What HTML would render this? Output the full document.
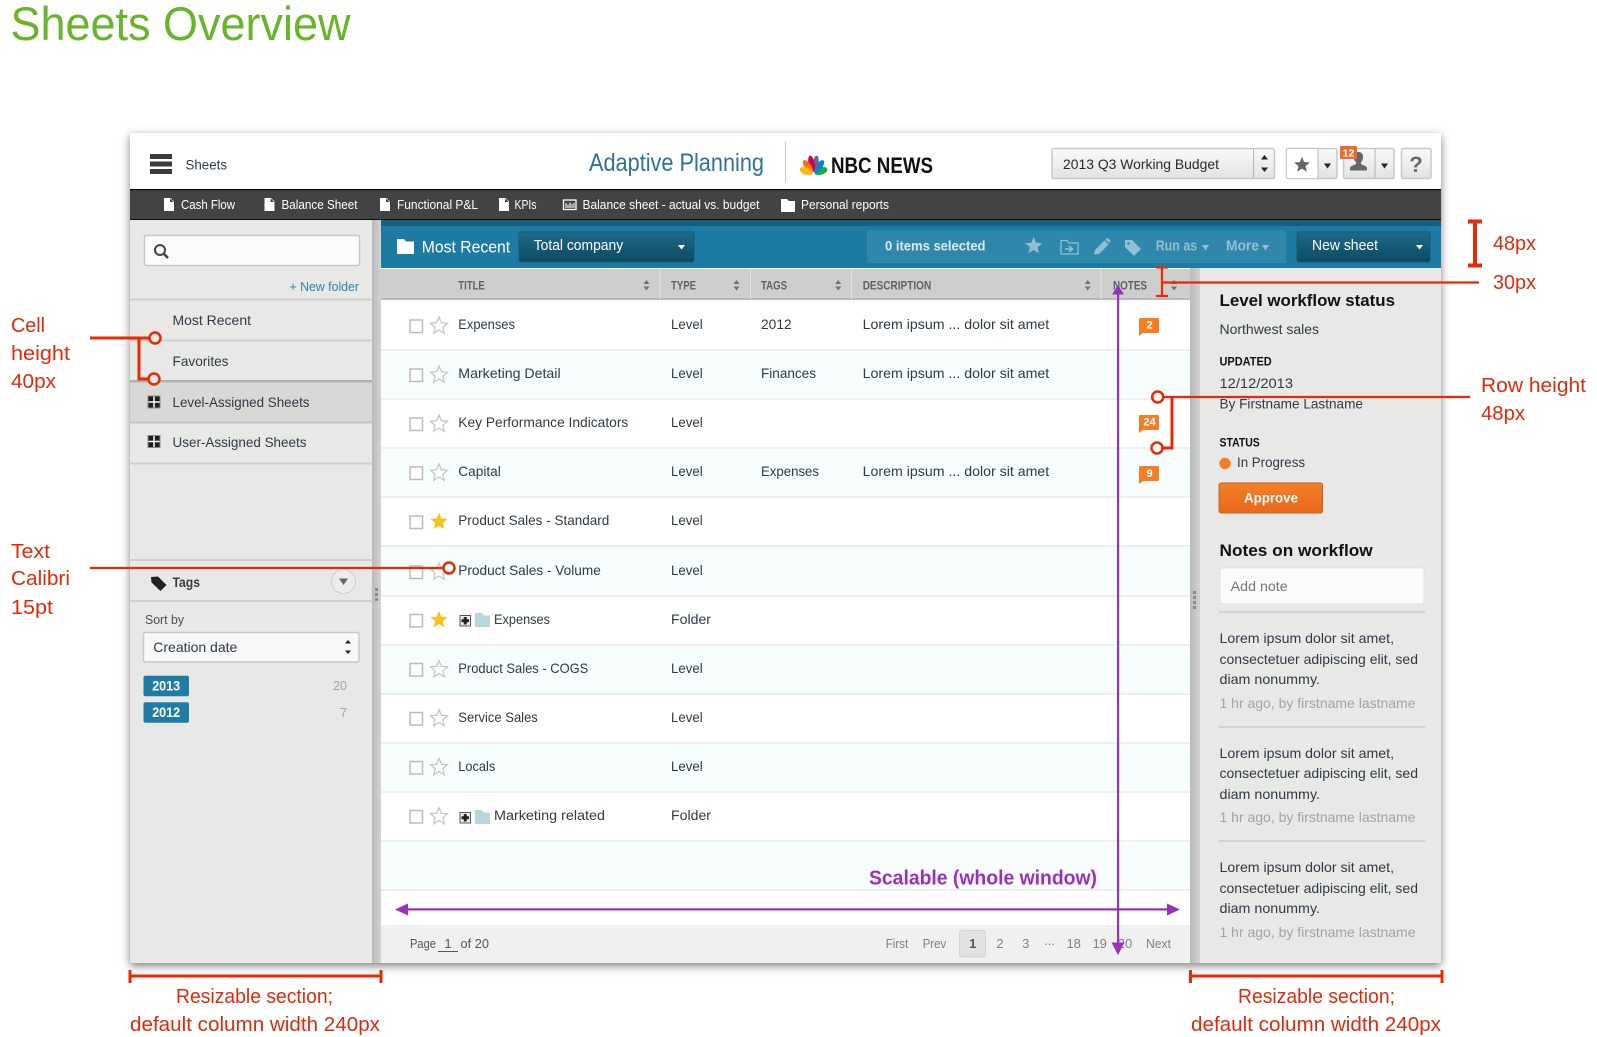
<!DOCTYPE html>
<html><head><meta charset="utf-8"><title>Sheets Overview</title>
<style>
html,body{margin:0;padding:0;background:#fff;width:1597px;height:1037px;overflow:hidden}
svg{display:block}
text{font-family:"Liberation Sans",sans-serif;font-size:14px;fill:#303a45}
.b{font-weight:bold}
.w{fill:#fff}
.dk{font-size:13px;fill:#fff}
.hd{font-size:11.5px;font-weight:bold;fill:#5f6266}
.r{font-size:20px;fill:#e3290a}
.g{fill:#a3a3a3}
.p{font-size:13px;fill:#808080}
.nt{font-size:11px;font-weight:bold;fill:#fff;text-anchor:middle}
.tb{font-size:14.5px;fill:#fff}
.mu{font-size:14.5px;font-weight:bold;fill:#8fc0d5}
</style></head><body>
<svg xmlns="http://www.w3.org/2000/svg" width="1597" height="1037" viewBox="0 0 1597 1037">
<defs>
<linearGradient id="dd" x1="0" y1="0" x2="0" y2="1"><stop offset="0" stop-color="#1d6a8a"/><stop offset="1" stop-color="#0c4a63"/></linearGradient>
<linearGradient id="bt" x1="0" y1="0" x2="0" y2="1"><stop offset="0" stop-color="#fafafa"/><stop offset="1" stop-color="#e2e2e2"/></linearGradient>
<linearGradient id="or" x1="0" y1="0" x2="0" y2="1"><stop offset="0" stop-color="#f58024"/><stop offset="1" stop-color="#e9661c"/></linearGradient>
<linearGradient id="sp" x1="0" y1="0" x2="1" y2="0"><stop offset="0" stop-color="#b9b9b9"/><stop offset="1" stop-color="#d2d2d2"/></linearGradient>
<filter id="sh" x="-5%" y="-5%" width="110%" height="110%"><feDropShadow dx="0" dy="3" stdDeviation="4.5" flood-color="#000" flood-opacity=".5"/></filter>
<path id="star" d="M0-9L2.35-3.24 8.56-2.78 3.8 1.24 5.29 7.28 0 4-5.29 7.28-3.8 1.24-8.56-2.78-2.35-3.24Z"/>
<path id="doc" d="M0 0H6.5L10 3.5V13H0ZM6 .8V4H9.2V3.6L6.4 .8Z" fill="#fff" fill-rule="evenodd"/>
<path id="fold" d="M0 0H7L9 2.5H15V14H0Z"/>
<g id="plus"><rect width="10.5" height="10.5" fill="#eee" stroke="#555" stroke-width="1"/><path d="M5.25 1.5V9M1.5 5.25H9" stroke="#222" stroke-width="3"/></g>
<path id="note" d="M0 1.5Q0 0 1.5 0H18.5Q20 0 20 1.5V13.5Q20 15 18.5 15H4L0 18Z" fill="#f57e25"/>
<path id="sort" d="M0 4L3 0 6 4ZM0 6.5H6L3 10.5Z" fill="#6f7174"/>
<rect id="cb" width="12.5" height="12.5" fill="#fff" stroke="#bcbcbc" stroke-width="1.5"/>
<g id="grid"><rect x=".5" y=".5" width="12" height="12" fill="#1d1d1d" stroke="#8a8a8a"/><path d="M6.5 1V12M1 6.5H12" stroke="#fff" stroke-width="1.500"/></g>
</defs>

<rect width="1597" height="1037" fill="#fff"/>
<text x="10.500" y="40" style="font-size:47.5px;fill:#68b52c" textLength="340" lengthAdjust="spacingAndGlyphs">Sheets Overview</text>

<!-- app shell -->
<rect x="130" y="133" width="1311" height="830" fill="#e8e8e6" filter="url(#sh)"/>
<rect x="130" y="133" width="1311" height="56" fill="#fff"/>

<!-- header -->
<path d="M150 154h22v5h-22zM150 161.500h22v5h-22zM150 169h22v5h-22z" fill="#3a3a3c"/>
<text x="185.500" y="169.500" fill="#444" textLength="41.500" lengthAdjust="spacingAndGlyphs">Sheets</text>
<text x="589" y="171" style="font-size:25px;fill:#2f719b" textLength="175" lengthAdjust="spacingAndGlyphs">Adaptive Planning</text>
<rect x="785" y="142" width="1" height="40" fill="#c8c8c8"/>
<g transform="translate(813.500 173) scale(.88 1.12)">
<ellipse cy="-8.500" rx="3.400" ry="7.500" fill="#0db14b" transform="rotate(78)"/>
<ellipse cy="-8.500" rx="3.400" ry="7.500" fill="#0089d0" transform="rotate(47)"/>
<ellipse cy="-8.500" rx="3.400" ry="7.500" fill="#6460aa" transform="rotate(15)"/>
<ellipse cy="-8.500" rx="3.400" ry="7.500" fill="#cc004c" transform="rotate(-15)"/>
<ellipse cy="-8.500" rx="3.400" ry="7.500" fill="#f37021" transform="rotate(-47)"/>
<ellipse cy="-8.500" rx="3.400" ry="7.500" fill="#fcb711" transform="rotate(-78)"/>
</g>
<text x="831" y="173" class="b" style="font-size:22px;fill:#111" textLength="102" lengthAdjust="spacingAndGlyphs">NBC NEWS</text>

<rect x="1052" y="148.500" width="222.500" height="30" rx="2" fill="url(#bt)" stroke="#c8c8c8" stroke-width="1.500"/>
<rect x="1253" y="149" width="1" height="29" fill="#b5b5b5"/>
<path d="M1264.500 155l-3.500 4.500h7zM1264.500 172l-3.500-4.500h7z" fill="#222"/>
<text x="1063" y="169" style="fill:#2a2a2a" textLength="156" lengthAdjust="spacingAndGlyphs">2013 Q3 Working Budget</text>

<rect x="1286.500" y="148.500" width="50.500" height="30" rx="2" fill="url(#bt)" stroke="#c8c8c8" stroke-width="1.500"/>
<rect x="1287" y="149" width="30.500" height="29" rx="1" fill="#fff"/>
<rect x="1317.500" y="149" width="1" height="29" fill="#b5b5b5"/>
<use href="#star" transform="translate(1302 165) scale(.92)" fill="#666"/>
<path d="M1324 163.500h7l-3.500 5z" fill="#222"/>

<rect x="1343.500" y="148.500" width="50.500" height="30" rx="2" fill="url(#bt)" stroke="#c8c8c8" stroke-width="1.500"/>
<rect x="1374.500" y="149" width="1" height="29" fill="#b5b5b5"/>
<path d="M1350 170.500v-2.500c0-2 5-3 6-4v-2c-1.500-1-2-2.500-2-5 0-3 1.500-5 4.500-5s4.500 2 4.500 5c0 2.500-.5 4-2 5v2c1 1 6 2 6 4v2.500z" fill="#666"/>
<path d="M1381 163.500h7l-3.500 5z" fill="#222"/>
<rect x="1340" y="146" width="17" height="13" rx="1" fill="#f26a2b"/>
<text x="1348.500" y="156.500" class="nt" style="font-size:10.5px">12</text>

<rect x="1401.500" y="148.500" width="29.500" height="30" rx="2" fill="url(#bt)" stroke="#c8c8c8" stroke-width="1.500"/>
<text x="1416" y="172" class="b" text-anchor="middle" style="font-size:22px;fill:#6a6a6a">?</text>

<!-- dark nav -->
<rect x="130" y="189" width="1311" height="31" fill="#434345"/>
<rect x="130" y="189" width="1311" height="1.200" fill="#000"/>
<rect x="130" y="219" width="1311" height="1" fill="#111"/>
<use href="#doc" x="164" y="198"/>
<text x="181" y="209" class="dk" textLength="54" lengthAdjust="spacingAndGlyphs">Cash Flow</text>
<use href="#doc" x="264.500" y="198"/>
<text x="281.500" y="209" class="dk" textLength="76" lengthAdjust="spacingAndGlyphs">Balance Sheet</text>
<use href="#doc" x="380" y="198"/>
<text x="397" y="209" class="dk" textLength="81" lengthAdjust="spacingAndGlyphs">Functional P&amp;L</text>
<use href="#doc" x="499" y="198"/>
<text x="514.500" y="209" class="dk" textLength="22" lengthAdjust="spacingAndGlyphs">KPIs</text>
<rect x="563.500" y="200" width="12.500" height="9.500" fill="none" stroke="#fff" stroke-width="1.300"/>
<path d="M566 203v5M568 204.500v3.500M570 202.500v5.500M572 204v4M574 203v5" stroke="#fff" stroke-width="1.100"/>
<text x="582.500" y="209" class="dk" textLength="177" lengthAdjust="spacingAndGlyphs">Balance sheet - actual vs. budget</text>
<path d="M781 199h6l2 2h6v11h-14z" fill="#fff"/>
<text x="801" y="209" class="dk" textLength="88" lengthAdjust="spacingAndGlyphs">Personal reports</text>

<!-- sidebar -->
<rect x="130" y="220" width="242" height="743" fill="#e8e8e6"/>
<rect x="372" y="220" width="9" height="743" fill="url(#sp)"/>
<rect x="144.500" y="235.500" width="215" height="30" rx="1.500" fill="#fbfbfb" stroke="#c9c9c9" stroke-width="1.500"/>
<circle cx="160" cy="250" r="5" fill="none" stroke="#444" stroke-width="2"/>
<path d="M163.500 253.500l4.500 4.500" stroke="#444" stroke-width="2.600"/>
<text x="289.500" y="291" style="font-size:12.500px;fill:#2f86a8" textLength="69.500" lengthAdjust="spacingAndGlyphs">+ New folder</text>
<rect x="130" y="298.500" width="242" height="2" fill="#cfcfcd"/>
<text x="172.500" y="325" textLength="78.500" lengthAdjust="spacingAndGlyphs">Most Recent</text>
<rect x="130" y="339.500" width="242" height="2" fill="#cfcfcd"/>
<text x="172.500" y="366" textLength="56" lengthAdjust="spacingAndGlyphs">Favorites</text>
<rect x="130" y="381" width="242" height="41" fill="#d8d8d6"/>
<rect x="130" y="380" width="242" height="2.500" fill="#b0b0ae"/>
<rect x="130" y="421.500" width="242" height="2" fill="#c4c4c2"/>
<use href="#grid" x="147.500" y="395.500"/>
<text x="172.500" y="407" textLength="137" lengthAdjust="spacingAndGlyphs">Level-Assigned Sheets</text>
<use href="#grid" x="147.500" y="435"/>
<text x="172.500" y="447" textLength="134" lengthAdjust="spacingAndGlyphs">User-Assigned Sheets</text>
<rect x="130" y="462.500" width="242" height="2" fill="#cfcfcd"/>
<rect x="130" y="559" width="242" height="2" fill="#cfcfcd"/>
<rect x="130" y="600" width="242" height="2" fill="#cfcfcd"/>
<path d="M151 577l7-.5 8.500 8.500-6 6-9-8.500z" fill="#222"/>
<text x="172.500" y="587" class="b" style="fill:#3a3a3c" textLength="27.500" lengthAdjust="spacingAndGlyphs">Tags</text>
<circle cx="343.500" cy="581.500" r="12" fill="#ececea" stroke="#cfcfcf" stroke-width="1"/>
<path d="M339 578.500h9l-4.500 6.500z" fill="#666"/>
<text x="145" y="624" style="font-size:13px;fill:#47505a" textLength="39" lengthAdjust="spacingAndGlyphs">Sort by</text>
<rect x="143.500" y="632.500" width="215.500" height="29.500" rx="2" fill="#f8f8f8" stroke="#c9c9c9" stroke-width="1.500"/>
<text x="153.300" y="652" textLength="84" lengthAdjust="spacingAndGlyphs">Creation date</text>
<path d="M348 640l-3 3.500h6zM348 654l-3-3.500h6z" fill="#222"/>
<rect x="143.500" y="675.700" width="45.500" height="20.500" rx="2" fill="#1f7ca4"/>
<text x="152.200" y="690.500" class="b w" textLength="28" lengthAdjust="spacingAndGlyphs">2013</text>
<rect x="143.500" y="702.300" width="45.500" height="20.500" rx="2" fill="#1f7ca4"/>
<text x="152.200" y="717" class="b w" textLength="28" lengthAdjust="spacingAndGlyphs">2012</text>
<text x="347" y="690" class="g" text-anchor="end" style="font-size:12.500px">20</text>
<text x="347" y="717" class="g" text-anchor="end" style="font-size:12.500px">7</text>
<path d="M375 588h3v3h-3zM375 593h3v3h-3zM375 598h3v3h-3z" fill="#8a8a8a"/>

<!-- teal toolbar -->
<rect x="381" y="220" width="1060" height="48" fill="#1c7aa3"/>
<rect x="381" y="220" width="1060" height="6" fill="#16607f"/>
<path d="M397 239h7l2 2.500h8v12.500h-17z" fill="#fff"/>
<text x="421.700" y="252.500" style="font-size:16.500px;fill:#fff" textLength="88.500" lengthAdjust="spacingAndGlyphs">Most Recent</text>
<rect x="519" y="232" width="175" height="30" rx="2" fill="url(#dd)" stroke="#175a76"/>
<text x="533.700" y="250" class="tb" textLength="89.500" lengthAdjust="spacingAndGlyphs">Total company</text>
<path d="M678 245h7l-3.500 4.500z" fill="#fff"/>
<rect x="867" y="230.500" width="419" height="32.500" rx="2" fill="#2f88ac"/>
<text x="885" y="250.500" class="b" style="font-size:14px;fill:#dbeaf1" textLength="100.500" lengthAdjust="spacingAndGlyphs">0 items selected</text>
<use href="#star" transform="translate(1033.700 246)" fill="#8fc0d5"/>
<path d="M1061 240.500h6l2 2.500h9v11h-17z" fill="none" stroke="#8fc0d5" stroke-width="1.300"/>
<path d="M1065 249h6M1069 246l3.500 3-3.500 3" fill="none" stroke="#8fc0d5" stroke-width="1.600"/>
<path d="M1094 254.500l1-4.500 9.500-9.500 4 4-9.500 9.500zM1105.500 239.500l1-1q1-.7 2 0l1.500 1.500q.7 1 0 2l-1 1z" fill="#8fc0d5"/>
<path d="M1125 240h7l9 9-7 7-9-9z" fill="#8fc0d5"/>
<circle cx="1128.500" cy="243.500" r="1.300" fill="#2f88ac"/>
<text x="1155.700" y="250.500" class="mu" textLength="41.500" lengthAdjust="spacingAndGlyphs">Run as</text>
<path d="M1202 245h7l-3.500 5.500z" fill="#8fc0d5"/>
<text x="1226" y="250.500" class="mu" textLength="33" lengthAdjust="spacingAndGlyphs">More</text>
<path d="M1262 245h7l-3.500 5.500z" fill="#8fc0d5"/>
<rect x="1297" y="232" width="133" height="30" rx="2" fill="url(#dd)" stroke="#175a76"/>
<text x="1312" y="250" class="tb" textLength="66" lengthAdjust="spacingAndGlyphs">New sheet</text>
<path d="M1416 245h7l-3.500 4.500z" fill="#fff"/>

<!-- table -->
<rect x="381" y="268" width="809" height="657" fill="#fff"/>
<g fill="#f7fdfd">
<rect x="381" y="350" width="809" height="49"/><rect x="381" y="448" width="809" height="49"/><rect x="381" y="546" width="809" height="50"/><rect x="381" y="645" width="809" height="49"/><rect x="381" y="742" width="809" height="49"/><rect x="381" y="840" width="809" height="50"/>
</g>
<g fill="#eeeff0">
<rect x="381" y="349" width="809" height="2"/><rect x="381" y="398" width="809" height="2"/><rect x="381" y="447" width="809" height="2"/><rect x="381" y="496" width="809" height="2"/><rect x="381" y="545" width="809" height="2"/><rect x="381" y="595" width="809" height="2"/><rect x="381" y="644" width="809" height="2"/><rect x="381" y="693" width="809" height="2"/><rect x="381" y="742" width="809" height="2"/><rect x="381" y="791" width="809" height="2"/><rect x="381" y="840" width="809" height="2"/><rect x="381" y="889" width="809" height="2"/>
</g>
<rect x="381" y="269" width="809" height="30" fill="#cececc"/>
<rect x="381" y="298" width="809" height="2" fill="#b9b9b9"/>
<g fill="#e4e4e2"><rect x="659.500" y="269" width="1" height="30"/><rect x="750" y="269" width="1" height="30"/><rect x="851" y="269" width="1" height="30"/><rect x="1100.500" y="269" width="1" height="30"/></g>
<text x="458.300" y="289.300" class="hd" textLength="26.500" lengthAdjust="spacingAndGlyphs">TITLE</text>
<text x="671" y="289.300" class="hd" textLength="25" lengthAdjust="spacingAndGlyphs">TYPE</text>
<text x="761" y="289.300" class="hd" textLength="26" lengthAdjust="spacingAndGlyphs">TAGS</text>
<text x="862.700" y="289.300" class="hd" textLength="68.500" lengthAdjust="spacingAndGlyphs">DESCRIPTION</text>
<text x="1113" y="289.300" class="hd" textLength="34" lengthAdjust="spacingAndGlyphs">NOTES</text>
<use href="#sort" x="643.500" y="280"/><use href="#sort" x="733.500" y="280"/><use href="#sort" x="835.200" y="280"/><use href="#sort" x="1084.700" y="280"/><use href="#sort" x="1171" y="280"/>

<!-- rows -->
<g>
<use href="#cb" x="410" y="320"/><use href="#cb" x="410" y="369"/><use href="#cb" x="410" y="418"/><use href="#cb" x="410" y="467"/><use href="#cb" x="410" y="516"/><use href="#cb" x="410" y="566"/><use href="#cb" x="410" y="614.500"/><use href="#cb" x="410" y="663.500"/><use href="#cb" x="410" y="712.500"/><use href="#cb" x="410" y="761.500"/><use href="#cb" x="410" y="810.500"/>
</g>
<g fill="#fff" stroke="#c4c4c4" stroke-width="1.200">
<use href="#star" transform="translate(439 326)"/><use href="#star" transform="translate(439 375)"/><use href="#star" transform="translate(439 424)"/><use href="#star" transform="translate(439 473)"/><use href="#star" transform="translate(439 572)"/><use href="#star" transform="translate(439 669.500)"/><use href="#star" transform="translate(439 718.500)"/><use href="#star" transform="translate(439 767.500)"/><use href="#star" transform="translate(439 816.500)"/>
</g>
<g fill="#f9bf1c"><use href="#star" transform="translate(439 521.700)"/><use href="#star" transform="translate(439 620)"/></g>
<use href="#plus" x="460" y="615.500"/><use href="#plus" x="460" y="812.500"/>
<use href="#fold" x="475" y="613" fill="#b9d6df"/><use href="#fold" x="475" y="810" fill="#b9d6df"/>

<text x="458.300" y="329" textLength="56.600" lengthAdjust="spacingAndGlyphs">Expenses</text>
<text x="458.300" y="378" textLength="102.300" lengthAdjust="spacingAndGlyphs">Marketing Detail</text>
<text x="458.300" y="427" textLength="170" lengthAdjust="spacingAndGlyphs">Key Performance Indicators</text>
<text x="458.300" y="476" textLength="42.500" lengthAdjust="spacingAndGlyphs">Capital</text>
<text x="458.300" y="525" textLength="151" lengthAdjust="spacingAndGlyphs">Product Sales - Standard</text>
<text x="458.300" y="575" textLength="142.500" lengthAdjust="spacingAndGlyphs">Product Sales - Volume</text>
<text x="494" y="624" textLength="56" lengthAdjust="spacingAndGlyphs">Expenses</text>
<text x="458.300" y="673" textLength="130" lengthAdjust="spacingAndGlyphs">Product Sales - COGS</text>
<text x="458.300" y="722" textLength="79.500" lengthAdjust="spacingAndGlyphs">Service Sales</text>
<text x="458.300" y="771" textLength="37" lengthAdjust="spacingAndGlyphs">Locals</text>
<text x="494" y="820" textLength="111" lengthAdjust="spacingAndGlyphs">Marketing related</text>

<g>
<text x="671" y="329" textLength="31.700" lengthAdjust="spacingAndGlyphs">Level</text>
<text x="671" y="378" textLength="31.700" lengthAdjust="spacingAndGlyphs">Level</text>
<text x="671" y="427" textLength="31.700" lengthAdjust="spacingAndGlyphs">Level</text>
<text x="671" y="476" textLength="31.700" lengthAdjust="spacingAndGlyphs">Level</text>
<text x="671" y="525" textLength="31.700" lengthAdjust="spacingAndGlyphs">Level</text>
<text x="671" y="575" textLength="31.700" lengthAdjust="spacingAndGlyphs">Level</text>
<text x="671" y="624" textLength="40" lengthAdjust="spacingAndGlyphs">Folder</text>
<text x="671" y="673" textLength="31.700" lengthAdjust="spacingAndGlyphs">Level</text>
<text x="671" y="722" textLength="31.700" lengthAdjust="spacingAndGlyphs">Level</text>
<text x="671" y="771" textLength="31.700" lengthAdjust="spacingAndGlyphs">Level</text>
<text x="671" y="820" textLength="40" lengthAdjust="spacingAndGlyphs">Folder</text>
</g>
<text x="761" y="329" textLength="30.700" lengthAdjust="spacingAndGlyphs">2012</text>
<text x="761" y="378" textLength="55" lengthAdjust="spacingAndGlyphs">Finances</text>
<text x="761" y="476" textLength="58" lengthAdjust="spacingAndGlyphs">Expenses</text>
<text x="862.700" y="329" textLength="186.500" lengthAdjust="spacingAndGlyphs">Lorem ipsum ... dolor sit amet</text>
<text x="862.700" y="378" textLength="186.500" lengthAdjust="spacingAndGlyphs">Lorem ipsum ... dolor sit amet</text>
<text x="862.700" y="476" textLength="186.500" lengthAdjust="spacingAndGlyphs">Lorem ipsum ... dolor sit amet</text>

<use href="#note" x="1139" y="318"/><text x="1149.500" y="328.500" class="nt">2</text>
<use href="#note" x="1139" y="415"/><text x="1149.500" y="425.500" class="nt">24</text>
<use href="#note" x="1139" y="466"/><text x="1149.500" y="477" class="nt">9</text>

<!-- pagination -->
<rect x="381" y="925" width="809" height="38" fill="#f0f0f0"/>
<text x="410" y="948" class="p" style="fill:#555" textLength="26" lengthAdjust="spacingAndGlyphs">Page</text>
<text x="448" y="948" class="p" style="fill:#555" text-anchor="middle">1</text>
<rect x="438" y="951" width="20" height="1" fill="#555"/>
<text x="460.500" y="948" class="p" style="fill:#555" textLength="28.500" lengthAdjust="spacingAndGlyphs">of 20</text>
<text x="885.700" y="948" class="p" textLength="22.500" lengthAdjust="spacingAndGlyphs">First</text>
<text x="922.700" y="948" class="p" textLength="23.500" lengthAdjust="spacingAndGlyphs">Prev</text>
<rect x="959.500" y="930.500" width="26" height="26.500" rx="2" fill="#e2e2e2" stroke="#d4d4d4"/>
<text x="972.700" y="948" class="p b" text-anchor="middle" style="fill:#555;font-weight:bold">1</text>
<text x="1000" y="948" class="p" text-anchor="middle">2</text>
<text x="1025.700" y="948" class="p" text-anchor="middle">3</text>
<text x="1049.500" y="945" class="p" text-anchor="middle">...</text>
<text x="1073.700" y="948" class="p" text-anchor="middle">18</text>
<text x="1099.700" y="948" class="p" text-anchor="middle">19</text>
<text x="1125" y="948" class="p" text-anchor="middle">20</text>
<text x="1146" y="948" class="p" textLength="25" lengthAdjust="spacingAndGlyphs">Next</text>

<!-- right panel -->
<rect x="1190" y="268" width="10" height="695" fill="url(#sp)"/>
<rect x="1200" y="268" width="241" height="695" fill="#e8e8e6"/>
<path d="M1193 591h3v3h-3zM1193 596h3v3h-3zM1193 601h3v3h-3zM1193 606h3v3h-3z" fill="#8a8a8a"/>
<text x="1219.500" y="306" class="b" style="font-size:17px;fill:#111" textLength="175.500" lengthAdjust="spacingAndGlyphs">Level workflow status</text>
<text x="1219.500" y="334" textLength="99.500" lengthAdjust="spacingAndGlyphs">Northwest sales</text>
<text x="1219.500" y="365.700" class="b" style="font-size:12px;fill:#111" textLength="52.200" lengthAdjust="spacingAndGlyphs">UPDATED</text>
<text x="1219.500" y="388" textLength="73.500" lengthAdjust="spacingAndGlyphs">12/12/2013</text>
<text x="1219.500" y="408.700" textLength="143.500" lengthAdjust="spacingAndGlyphs">By Firstname Lastname</text>
<text x="1219.500" y="446.700" class="b" style="font-size:12px;fill:#111" textLength="40.200" lengthAdjust="spacingAndGlyphs">STATUS</text>
<circle cx="1225" cy="463.500" r="5.700" fill="#f57e25"/>
<text x="1237" y="467.200" textLength="68" lengthAdjust="spacingAndGlyphs">In Progress</text>
<rect x="1219" y="483" width="103.500" height="30" rx="2" fill="url(#or)" stroke="#c9622a"/>
<text x="1244" y="502.500" class="b w" textLength="54" lengthAdjust="spacingAndGlyphs">Approve</text>
<text x="1219.500" y="556" class="b" style="font-size:17px;fill:#111" textLength="153.200" lengthAdjust="spacingAndGlyphs">Notes on workflow</text>
<rect x="1220" y="568" width="204" height="36" rx="1.500" fill="#fbfbfb" stroke="#e0e0e0"/>
<text x="1230.700" y="591" style="fill:#72777d" textLength="57" lengthAdjust="spacingAndGlyphs">Add note</text>
<rect x="1219" y="611" width="206" height="2" fill="#d4d4d2"/>

<text x="1219.500" y="643" textLength="174.500" lengthAdjust="spacingAndGlyphs">Lorem ipsum dolor sit amet,</text>
<text x="1219.500" y="664" textLength="198.500" lengthAdjust="spacingAndGlyphs">consectetuer adipiscing elit, sed</text>
<text x="1219.500" y="684" textLength="100.500" lengthAdjust="spacingAndGlyphs">diam nonummy.</text>
<text x="1219.500" y="708" class="g" textLength="196" lengthAdjust="spacingAndGlyphs">1 hr ago, by firstname lastname</text>
<rect x="1219" y="726" width="206" height="2" fill="#d4d4d2"/>
<text x="1219.500" y="758" textLength="174.500" lengthAdjust="spacingAndGlyphs">Lorem ipsum dolor sit amet,</text>
<text x="1219.500" y="778" textLength="198.500" lengthAdjust="spacingAndGlyphs">consectetuer adipiscing elit, sed</text>
<text x="1219.500" y="799" textLength="100.500" lengthAdjust="spacingAndGlyphs">diam nonummy.</text>
<text x="1219.500" y="822" class="g" textLength="196" lengthAdjust="spacingAndGlyphs">1 hr ago, by firstname lastname</text>
<rect x="1219" y="840" width="206" height="2" fill="#d4d4d2"/>
<text x="1219.500" y="872" textLength="174.500" lengthAdjust="spacingAndGlyphs">Lorem ipsum dolor sit amet,</text>
<text x="1219.500" y="893" textLength="198.500" lengthAdjust="spacingAndGlyphs">consectetuer adipiscing elit, sed</text>
<text x="1219.500" y="913" textLength="100.500" lengthAdjust="spacingAndGlyphs">diam nonummy.</text>
<text x="1219.500" y="937" class="g" textLength="196" lengthAdjust="spacingAndGlyphs">1 hr ago, by firstname lastname</text>

<!-- purple annotations -->
<g fill="#9b2fc1">
<rect x="1117" y="292" width="2.200" height="652"/>
<path d="M1118 285l6 9.500h-12zM1118 955l-6.500-12.500h13z"/>
<rect x="404" y="908.300" width="770" height="2.200"/>
<path d="M395 909.500l13-6v12zM1180 909.500l-13-6v12z"/>
</g>
<text x="869" y="884.500" class="b" style="font-size:20px;fill:#9b2fc1" textLength="228" lengthAdjust="spacingAndGlyphs">Scalable (whole window)</text>

<!-- red annotations -->
<g fill="none" stroke="#e62a04">
<path d="M90 338H150M139 338V379H149" stroke-width="3"/>
<circle cx="155" cy="338" r="5.500" stroke-width="2.500" fill="#e8e8e6"/>
<circle cx="154" cy="379" r="5.500" stroke-width="2.500" fill="#e8e8e6"/>
<path d="M90 568H444" stroke-width="2.200"/>
<circle cx="449" cy="568" r="5.500" stroke-width="2.500" fill="#f7fdfd"/>
<path d="M1162 282.500H1479" stroke-width="2.200"/>
<path d="M1162 267V296M1156 267.500H1168M1156 296H1168" stroke-width="2.200"/>
<path d="M1163 397H1470" stroke-width="2.200"/>
<path d="M1172 397V448H1162" stroke-width="3"/>
<circle cx="1157.700" cy="397" r="5.500" stroke-width="2.500" fill="#fff"/>
<circle cx="1157" cy="448" r="5.500" stroke-width="2.500" fill="#fff"/>
<path d="M1475 221V266M1468 221.500H1482M1468 265.500H1482" stroke-width="4"/>
<path d="M130 976H381M130 970V983M381 970V983" stroke-width="3"/>
<path d="M1190 976H1442M1190.500 970V983M1442 970V983" stroke-width="3"/>
</g>
<text x="11" y="332" class="r" textLength="34" lengthAdjust="spacingAndGlyphs">Cell</text>
<text x="11" y="360" class="r" textLength="59" lengthAdjust="spacingAndGlyphs">height</text>
<text x="11" y="388" class="r" textLength="45" lengthAdjust="spacingAndGlyphs">40px</text>
<text x="11" y="558" class="r" textLength="39" lengthAdjust="spacingAndGlyphs">Text</text>
<text x="11" y="585" class="r" textLength="59" lengthAdjust="spacingAndGlyphs">Calibri</text>
<text x="11" y="614" class="r" textLength="42" lengthAdjust="spacingAndGlyphs">15pt</text>
<text x="1493" y="250" class="r" textLength="43" lengthAdjust="spacingAndGlyphs">48px</text>
<text x="1493" y="289" class="r" textLength="43" lengthAdjust="spacingAndGlyphs">30px</text>
<text x="1481" y="392" class="r" textLength="105" lengthAdjust="spacingAndGlyphs">Row height</text>
<text x="1481" y="420" class="r" textLength="44" lengthAdjust="spacingAndGlyphs">48px</text>
<text x="176" y="1003" class="r" textLength="157" lengthAdjust="spacingAndGlyphs">Resizable section;</text>
<text x="130" y="1031" class="r" textLength="250" lengthAdjust="spacingAndGlyphs">default column width 240px</text>
<text x="1238" y="1003" class="r" textLength="157" lengthAdjust="spacingAndGlyphs">Resizable section;</text>
<text x="1191" y="1031" class="r" textLength="250" lengthAdjust="spacingAndGlyphs">default column width 240px</text>
</svg>
</body></html>
